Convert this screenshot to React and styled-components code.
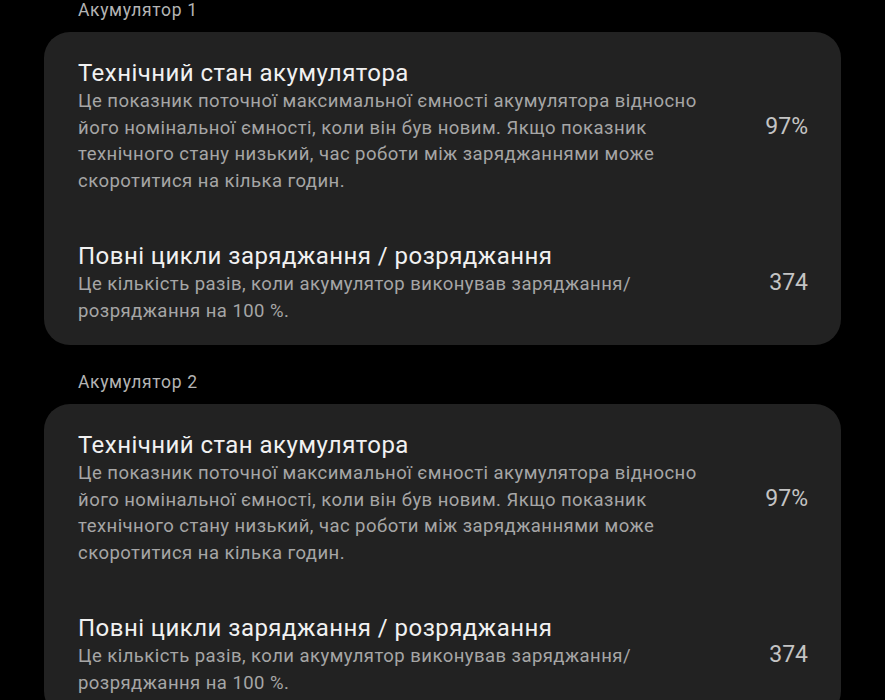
import React from 'react';
import styled, { createGlobalStyle } from 'styled-components';

const GlobalStyle = createGlobalStyle`
	html, body {
		margin: 0;
		padding: 0;
		background: #000;
	}
	body {
		font-family: Roboto, "Noto Sans", "Liberation Sans", sans-serif;
		-webkit-font-smoothing: antialiased;
	}
`

const Page = styled.div`
	width: 885px;
	height: 700px;
	overflow: hidden;
	background: #000;
	padding: 0 44px 0 44px;
	box-sizing: border-box;
`

const Section = styled.section`
	display: flex;
	flex-direction: column;
	margin-bottom: 27px;
`

const SectionLabel = styled.h4`
	margin: 0 0 12px 0;
	padding-left: 34px;
	font-size: 17.5px;
	letter-spacing: 0.65px;
	line-height: 20px;
	font-weight: 400;
	color: #b4b4b4;
`

const Card = styled.div`
	background: #222222;
	border-radius: 26px;
	padding: 26px 33px 21px 34px;
	display: flex;
	flex-direction: column;
	gap: 47px;
`

const Row = styled.div`
	display: flex;
	align-items: center;
	justify-content: space-between;
`

const RowText = styled.div`
	width: 648px;
`

const RowTitle = styled.h3`
	margin: 0;
	font-size: 24px;
	letter-spacing: 0.45px;
	line-height: 30px;
	font-weight: 400;
	color: #f1f1f1;
`

const RowDescription = styled.p`
	margin: 0;
	font-size: 18.5px;
	letter-spacing: 0.45px;
	line-height: 26.5px;
	color: #a6a6a6;
`

const RowValue = styled.span`
	font-size: 23px;
	color: #c4c4c4;
`

const rows = [
	{
		title: 'Технічний стан акумулятора',
		description: 'Це показник поточної максимальної ємності акумулятора відносно його номінальної ємності, коли він був новим. Якщо показник технічного стану низький, час роботи між заряджаннями може скоротитися на кілька годин.',
		value: '97%',
	},
	{
		title: 'Повні цикли заряджання / розряджання',
		description: 'Це кількість разів, коли акумулятор виконував заряджання/ розряджання на 100 %.',
		value: '374',
	},
]

const batteries = ['Акумулятор 1', 'Акумулятор 2']

const App = () => {
	return (
		<>
			<GlobalStyle />
			<Page>
				{batteries.map(name => (
					<Section key={name}>
						<SectionLabel>{name}</SectionLabel>
						<Card>
							{rows.map(row => (
								<Row key={row.title}>
									<RowText>
										<RowTitle>{row.title}</RowTitle>
										<RowDescription>{row.description}</RowDescription>
									</RowText>
									<RowValue>{row.value}</RowValue>
								</Row>
							))}
						</Card>
					</Section>
				))}
			</Page>
		</>
	)
}

export default App;
